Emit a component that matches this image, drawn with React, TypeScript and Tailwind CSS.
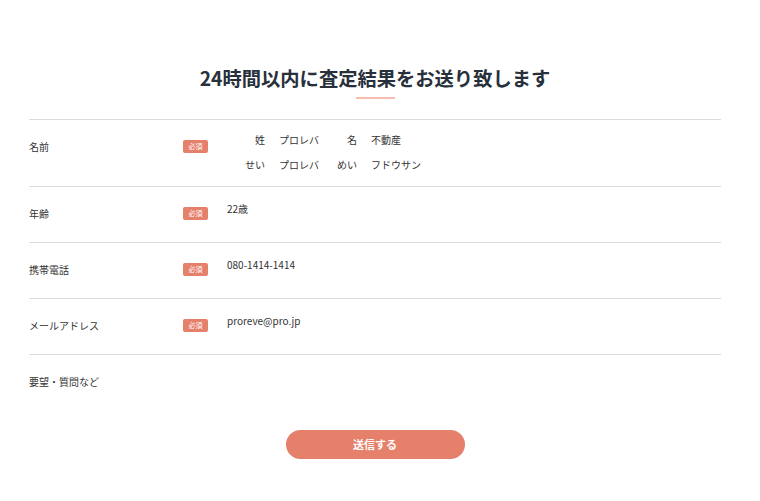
const font = "font-['Noto_Sans_CJK_JP','Noto_Sans',sans-serif]";

function Badge() {
  return (
    <span className="flex h-[13px] w-[25px] items-center justify-center rounded-[2px] bg-[#e5806a] text-[7px] leading-none text-white">
      必須
    </span>
  );
}

function Row({ label, required, h, children }: { label: string; required?: boolean; h: string; children?: React.ReactNode }) {
  return (
    <div className={`flex items-start border-b border-[#dcdcdc] ${h}`}>
      <div className="w-[154px] pt-[19px] text-[10px] leading-[16px] text-[#333]">{label}</div>
      <div className="w-[44px] pt-[20px]">{required && <Badge />}</div>
      <div className="pt-[14px] text-[10px] leading-[16px] text-[#333]">{children}</div>
    </div>
  );
}

export default function App() {
  return (
    <div className={`${font} h-[501px] w-[760px] bg-white`}>
      <div className="ml-[29px] w-[692px]">
        <div className="pt-[64px] text-center">
          <h1 className="text-[19.3px] font-bold leading-[28px] text-[#27303b]">24時間以内に査定結果をお送り致します</h1>
          <div className="mx-auto mt-[5px] h-[2px] w-[39px] bg-[#f7bcae]"></div>
        </div>

        <div className="mt-[20px] border-t border-[#dcdcdc]">
          <Row label="名前" required h="h-[67px]">
            <div className="-mt-[2px] flex flex-col gap-[9px]">
              <div className="flex">
                <span className="w-[38px] text-right">姓</span>
                <span className="ml-[14px] w-[58px]">プロレバ</span>
                <span className="w-[20px] text-right">名</span>
                <span className="ml-[14px]">不動産</span>
              </div>
              <div className="flex">
                <span className="w-[38px] text-right">せい</span>
                <span className="ml-[14px] w-[58px]">プロレバ</span>
                <span className="w-[20px] text-right">めい</span>
                <span className="ml-[14px]">フドウサン</span>
              </div>
            </div>
          </Row>
          <Row label="年齢" required h="h-[56px]">22歳</Row>
          <Row label="携帯電話" required h="h-[56px]">080-1414-1414</Row>
          <Row label="メールアドレス" required h="h-[56px]">proreve@pro.jp</Row>
          <div className="flex h-[56px] items-start">
            <div className="w-[154px] pt-[19px] text-[10px] leading-[16px] text-[#333]">要望・質問など</div>
          </div>
        </div>

        <div className="mt-[19px] flex justify-center">
          <button className="h-[29px] w-[179px] rounded-full bg-[#e5806a] text-[11px] font-bold text-white">
            送信する
          </button>
        </div>
      </div>
    </div>
  );
}
